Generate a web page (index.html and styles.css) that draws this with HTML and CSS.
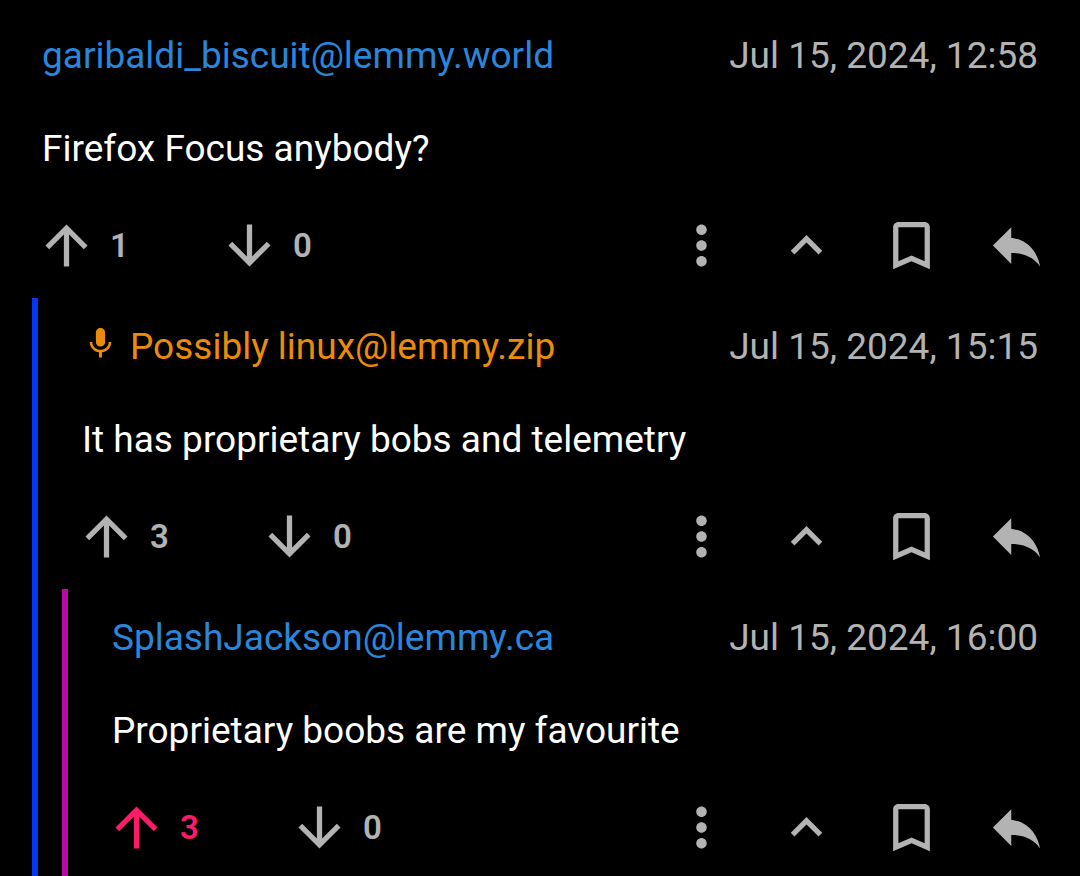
FILE: index.html
```html
<!DOCTYPE html>
<html lang="en">
<head>
  <meta charset="UTF-8" />
  <meta name="viewport" content="width=device-width, initial-scale=1.0"/>
  <title>Comments</title>
  <link rel="stylesheet" href="styles.css">
</head>
<body>
  <!-- shared icons -->
  <svg class="sprite" aria-hidden="true">
    <symbol id="up" viewBox="0 0 24 24"><path d="M4 12l1.41 1.41L11 7.83V20h2V7.83l5.58 5.59L20 12l-8-8-8 8z"/></symbol>
    <symbol id="down" viewBox="0 0 24 24"><path d="M20 12l-1.41-1.41L13 16.17V4h-2v12.17l-5.58-5.59L4 12l8 8 8-8z"/></symbol>
    <symbol id="more" viewBox="0 0 24 24"><path d="M12 8c1.1 0 2-.9 2-2s-.9-2-2-2-2 .9-2 2 .9 2 2 2zm0 2c-1.1 0-2 .9-2 2s.9 2 2 2 2-.9 2-2-.9-2-2-2zm0 6c-1.1 0-2 .9-2 2s.9 2 2 2 2-.9 2-2-.9-2-2-2z"/></symbol>
    <symbol id="collapse" viewBox="0 0 24 24"><path d="M12 8l-6 6 1.41 1.41L12 10.83l4.59 4.58L18 14z"/></symbol>
    <symbol id="save" viewBox="0 0 24 24"><path d="M17 3H7c-1.1 0-2 .9-2 2v16l7-3 7 3V5c0-1.1-.9-2-2-2zm0 15l-5-2.18L7 18V5h10v13z"/></symbol>
    <symbol id="reply" viewBox="0 0 24 24"><path d="M10 9V5l-7 7 7 7v-4.1c5 0 8.5 1.6 11 5.1-1-5-4-10-11-11z"/></symbol>
    <symbol id="mic" viewBox="0 0 24 24"><path d="M12 14c1.66 0 2.99-1.34 2.99-3L15 5c0-1.66-1.34-3-3-3S9 3.34 9 5v6c0 1.66 1.34 3 3 3zm5.3-3c0 3-2.54 5.1-5.3 5.1S6.7 14 6.7 11H5c0 3.41 2.72 6.23 6 6.72V21h2v-3.28c3.28-.48 6-3.3 6-6.72h-1.7z"/></symbol>
  </svg>

  <main class="thread">
    <article class="comment">
      <header class="meta">
        <a class="author" href="#">garibaldi_biscuit@lemmy.world</a>
        <time datetime="2024-07-15T12:58">Jul 15, 2024, 12:58</time>
      </header>
      <p class="text">Firefox Focus anybody?</p>
      <div class="actions">
        <button class="vote" aria-label="Upvote"><svg class="icon"><use href="#up"/></svg><span>1</span></button>
        <button class="vote" aria-label="Downvote"><svg class="icon"><use href="#down"/></svg><span>0</span></button>
        <div class="tools">
          <button aria-label="More"><svg class="icon"><use href="#more"/></svg></button>
          <button aria-label="Collapse"><svg class="icon"><use href="#collapse"/></svg></button>
          <button aria-label="Save"><svg class="icon"><use href="#save"/></svg></button>
          <button aria-label="Reply"><svg class="icon"><use href="#reply"/></svg></button>
        </div>
      </div>
    </article>

    <section class="replies">
      <article class="comment">
        <header class="meta">
          <a class="author op" href="#"><svg class="mic"><use href="#mic"/></svg>Possibly linux@lemmy.zip</a>
          <time datetime="2024-07-15T15:15">Jul 15, 2024, 15:15</time>
        </header>
        <p class="text">It has proprietary bobs and telemetry</p>
        <div class="actions">
          <button class="vote" aria-label="Upvote"><svg class="icon"><use href="#up"/></svg><span>3</span></button>
          <button class="vote" aria-label="Downvote"><svg class="icon"><use href="#down"/></svg><span>0</span></button>
          <div class="tools">
            <button aria-label="More"><svg class="icon"><use href="#more"/></svg></button>
            <button aria-label="Collapse"><svg class="icon"><use href="#collapse"/></svg></button>
            <button aria-label="Save"><svg class="icon"><use href="#save"/></svg></button>
            <button aria-label="Reply"><svg class="icon"><use href="#reply"/></svg></button>
          </div>
        </div>
      </article>

      <section class="replies">
        <article class="comment">
          <header class="meta">
            <a class="author" href="#">SplashJackson@lemmy.ca</a>
            <time datetime="2024-07-15T16:00">Jul 15, 2024, 16:00</time>
          </header>
          <p class="text">Proprietary boobs are my favourite</p>
          <div class="actions">
            <button class="vote voted" aria-label="Upvote"><svg class="icon"><use href="#up"/></svg><span>3</span></button>
            <button class="vote" aria-label="Downvote"><svg class="icon"><use href="#down"/></svg><span>0</span></button>
            <div class="tools">
              <button aria-label="More"><svg class="icon"><use href="#more"/></svg></button>
              <button aria-label="Collapse"><svg class="icon"><use href="#collapse"/></svg></button>
              <button aria-label="Save"><svg class="icon"><use href="#save"/></svg></button>
              <button aria-label="Reply"><svg class="icon"><use href="#reply"/></svg></button>
            </div>
          </div>
        </article>
      </section>
    </section>
  </main>
</body>
</html>
```

FILE: styles.css
```css
body {
  margin: 0;
  background: #000;
  color: #fff;
  font-family: Roboto, sans-serif;
  font-size: 37px;
  line-height: 44px;
}

.sprite {
  display: none;
}

.thread {
  padding-top: 7px;
}

.comment {
  padding: 27px 42px 17px;
}

.replies {
  margin: 4px 0 0 32px;
  border-left: 6px solid #0437f2;
}

.replies .comment {
  padding-left: 44px;
}

.replies .replies {
  margin-left: 24px;
  border-left-color: #b80aa8;
}

.meta {
  display: flex;
  justify-content: space-between;
  color: #b3b3b3;
}

.author {
  display: flex;
  align-items: flex-start;
  color: #2a86da;
  text-decoration: none;
}

.op {
  color: #ea8b0c;
}

.mic {
  width: 37px;
  height: 37px;
  margin-right: 11px;
  fill: currentColor;
}

.text {
  margin: 49px 0 43px;
}

.actions {
  display: flex;
  margin: 0 -10px 0 -7px;
}

button {
  display: flex;
  align-items: center;
  padding: 0;
  border: none;
  background: none;
  color: #b3b3b3;
  font: inherit;
  cursor: pointer;
}

.vote {
  gap: 12px;
  width: 183px;
  font-size: 33px;
  font-weight: 600;
}

.voted {
  color: #ff1b68;
}

.icon {
  width: 63px;
  height: 63px;
  fill: currentColor;
}

.tools {
  display: flex;
  gap: 42px;
  margin-left: auto;
}
```
